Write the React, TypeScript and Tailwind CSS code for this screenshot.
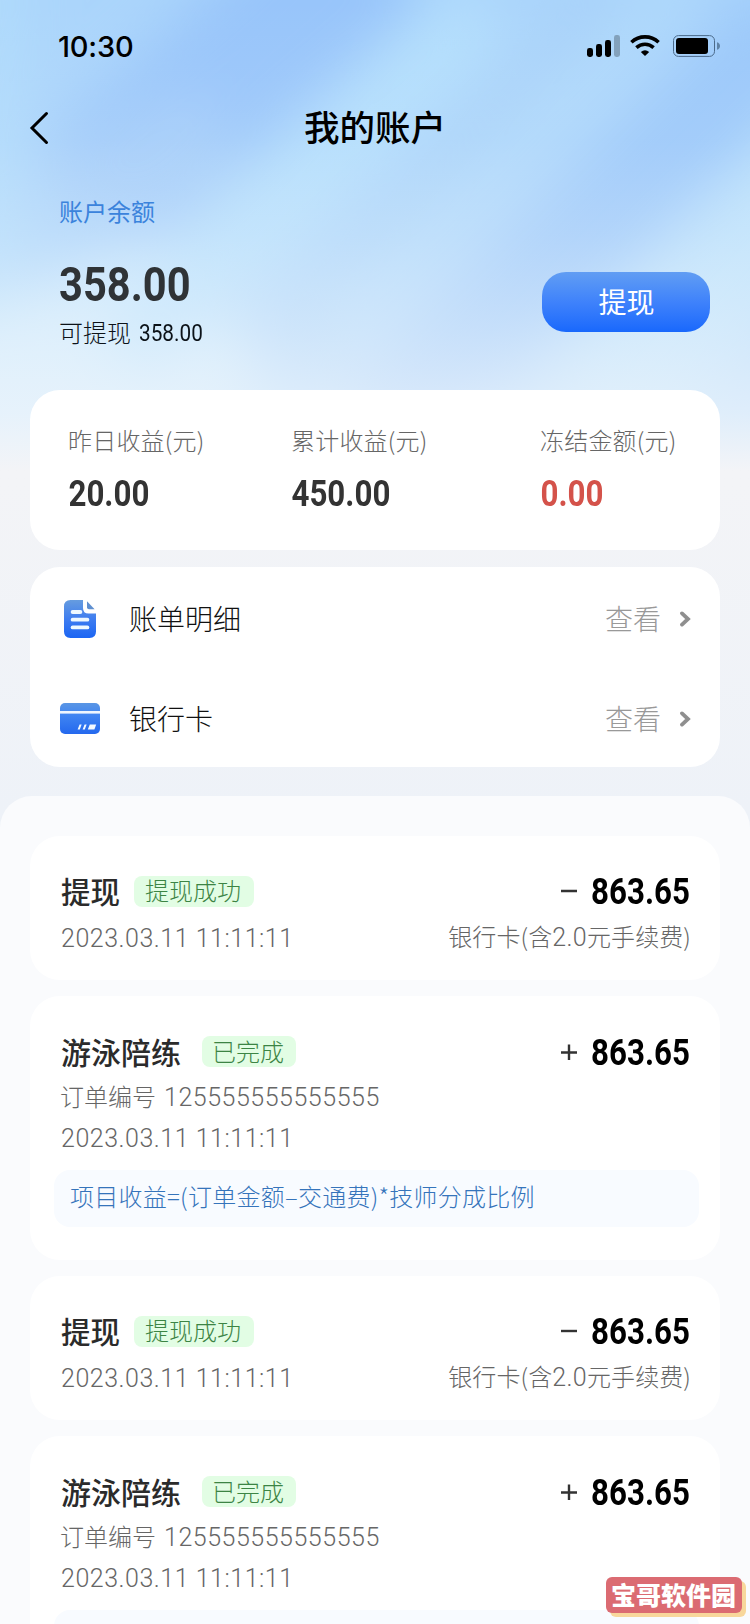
const CJK = "font-['Noto_Sans_CJK_SC',sans-serif]";
const NUM = "font-[Roboto,'Noto_Sans_CJK_SC',sans-serif] text-[25px] font-light tracking-[0.52px]";

function Backdrop() {
  return (
    <svg className="absolute inset-0" width="750" height="470" viewBox="0 0 750 470" preserveAspectRatio="none" aria-hidden="true">
      <defs>
        <filter id="soft" x="-30%" y="-30%" width="160%" height="160%">
          <feGaussianBlur stdDeviation="28" />
        </filter>
        <linearGradient id="fade" x1="0" y1="0" x2="0" y2="1">
          <stop offset="0" stopColor="#eff5fb" stopOpacity="0" />
          <stop offset="0.3" stopColor="#eff5fb" stopOpacity="0.1" />
          <stop offset="0.5" stopColor="#eff5fb" stopOpacity="0.28" />
          <stop offset="0.7" stopColor="#eff5fb" stopOpacity="0.52" />
          <stop offset="0.88" stopColor="#eff5fb" stopOpacity="0.76" />
          <stop offset="1" stopColor="#f3f4f7" stopOpacity="1" />
        </linearGradient>
      </defs>
      <rect width="750" height="470" fill="#abd5fb" />
      <g filter="url(#soft)" fill="none">
        <path d="M-30 500 L-10 -60" stroke="#b0dcfc" strokeWidth="60" />
        <path d="M100 190 L380 -60" stroke="#98c5fa" strokeWidth="150" />
        <path d="M60 200 L220 130" stroke="#a4cdf9" strokeWidth="90" />
        <path d="M-60 430 L230 320" stroke="#cbe9fd" strokeWidth="190" />
        <path d="M120 360 L480 10" stroke="#b4dffd" strokeWidth="76" />
        <path d="M300 350 L620 0" stroke="#a6cff8" strokeWidth="56" />
        <path d="M330 330 L680 -20" stroke="#b0dafc" strokeWidth="40" />
        <path d="M380 440 L590 230 L800 20" stroke="#9ac7fa" strokeWidth="105" />
        <path d="M590 420 L860 140" stroke="#b8e0fc" strokeWidth="125" />
      </g>
      <rect width="750" height="470" fill="url(#fade)" />
    </svg>
  );
}

function StatusIcons() {
  return (
    <svg width="136" height="24" viewBox="0 0 136 24" aria-hidden="true">
      <rect x="1" y="14" width="6" height="9" rx="2.4" />
      <rect x="10" y="10" width="6" height="13" rx="2.4" />
      <rect x="19" y="6" width="6" height="17" rx="2.4" />
      <rect x="28" y="1" width="6" height="22" rx="2.4" opacity="0.25" />
      <g fill="none" stroke="#000" strokeWidth="3.6">
        <path d="M45.4 8.2 A20 20 0 0 1 72.6 8.2" />
        <path d="M50.4 13.6 A12.8 12.8 0 0 1 67.6 13.6" />
      </g>
      <path d="M54.8 18 A6.6 6.6 0 0 1 63.2 18 L59 21.9 Z" />
      <rect x="87.5" y="1.6" width="41" height="20.8" rx="5" fill="none" stroke="#4b6a8a" strokeWidth="1" />
      <rect x="90" y="4" width="32" height="16" rx="3" />
      <path d="M131 8.3 Q134 9.2 134 12 Q134 14.8 131 15.8 Z" fill="#5f83a6" />
    </svg>
  );
}

function BillIcon() {
  return (
    <svg width="32" height="38" viewBox="0 0 32 38" aria-hidden="true">
      <defs>
        <linearGradient id="bill" x1="0" y1="0" x2="0" y2="1">
          <stop offset="0" stopColor="#669cdf" />
          <stop offset="0.5" stopColor="#3f7df0" />
          <stop offset="1" stopColor="#1b65f3" />
        </linearGradient>
      </defs>
      <path d="M6.5 0 H19 V8 Q19 13.5 24.5 13.5 H32 V31.5 Q32 38 25.5 38 H6.5 Q0 38 0 31.5 V6.5 Q0 0 6.5 0 Z" fill="url(#bill)" />
      <path d="M23 1.2 L30.6 9.2 H25 Q23 9.2 23 7.2 Z" fill="#5f8fd0" />
      <g stroke="#eef8ff" strokeWidth="3.8" strokeLinecap="round">
        <path d="M8.6 12 H16.4" />
        <path d="M8.6 19.7 H23.4" />
        <path d="M8.6 27.4 H23.4" />
      </g>
    </svg>
  );
}

function CardIcon() {
  return (
    <svg width="40" height="31" viewBox="0 0 40 31" aria-hidden="true">
      <defs>
        <linearGradient id="bank" x1="0" y1="0" x2="0" y2="1">
          <stop offset="0" stopColor="#5a96e4" />
          <stop offset="0.4" stopColor="#3f84f2" />
          <stop offset="1" stopColor="#2468ee" />
        </linearGradient>
      </defs>
      <rect width="40" height="31" rx="5" fill="url(#bank)" />
      <rect y="8" width="40" height="2.6" fill="#eef6ff" />
      <g fill="#f4faff">
        <path d="M19.6 21.4 H21.6 L19.8 26.4 H17.6 Z" />
        <path d="M24.6 21.4 H26.6 L24.8 26.4 H22.6 Z" />
        <path d="M29.8 21.4 H36.2 L34.4 26.4 H27.8 Z" />
      </g>
    </svg>
  );
}

function Chevron() {
  return (
    <svg width="11" height="16" viewBox="0 0 11 16" fill="none" stroke="#8f8f8f" strokeWidth="3.8" strokeLinecap="round" aria-hidden="true">
      <path d="M2 2.4 L8 8 L2 13.6" />
    </svg>
  );
}

function Stat({ label, value, className }: { label: string; value: string; className: string }) {
  return (
    <div className={className}>
      <div className="h-9 text-2xl leading-9 font-light tracking-[0.2px] whitespace-nowrap text-[#666]">{label}</div>
      <div className="mt-[18px] h-9 origin-left scale-x-[0.87] pl-[0.5px] font-[Roboto,sans-serif] text-[36px] leading-9 font-bold">{value}</div>
    </div>
  );
}

function MenuRow({ icon, label }: { icon: React.ReactNode; label: string }) {
  return (
    <div className="flex h-[100px] items-center pr-[29px] pb-px pl-[30px]">
      <div className="flex w-10 justify-center">{icon}</div>
      <span className="ml-[29px] pb-px text-[28px] leading-10 font-light text-[#111]">{label}</span>
      <span className="mr-[19px] ml-auto pb-px text-[28px] leading-10 font-light text-[#999]">查看</span>
      <Chevron />
    </div>
  );
}

function Amount({ sign }: { sign: "+" | "-" }) {
  return (
    <div className="ml-auto flex h-9 items-center">
      <svg width="16" height="16" viewBox="0 0 16 16" stroke="#333" strokeWidth="2.4" aria-hidden="true">
        <path d={sign === "+" ? "M0 8.5 H16 M8 0.5 V16" : "M0 8 H16"} />
      </svg>
      <div className="ml-[14px] w-[100px] pt-px">
        <div className="origin-left scale-x-[0.87] font-[Roboto,sans-serif] text-[36px] leading-9 font-bold text-black">863.65</div>
      </div>
    </div>
  );
}

function Badge({ children, className }: { children: string; className: string }) {
  return (
    <span className={`flex h-[31px] items-center justify-center rounded-lg bg-[#e2fde4] pr-[2px] pb-[2px] text-2xl leading-none font-light text-[#3c8444] ${className}`}>
      {children}
    </span>
  );
}

function Withdrawal() {
  return (
    <article className="mb-4 h-36 rounded-[30px] bg-white pt-[37px] pr-[29px] pl-[31px]">
      <div className="flex h-9 items-center">
        <h2 className="pb-[3px] text-[29.5px] leading-9 font-medium text-[#2b2b2b]">提现</h2>
        <Badge className="ml-[14px] w-[120px]">提现成功</Badge>
        <Amount sign="-" />
      </div>
      <div className="mt-[10px] flex h-9 items-center justify-between text-2xl leading-9 font-light whitespace-nowrap text-[#666]">
        <span className={`pt-[3px] ${NUM}`}>2023.03.11 11:11:11</span>
        <span className="-mt-px tracking-[0.1px]">
          银行卡(含<span className="font-[Roboto,sans-serif] text-[25px] tracking-[0.3px]">2.0</span>元手续费)
        </span>
      </div>
    </article>
  );
}

function Lesson({ formula }: { formula?: string }) {
  return (
    <article className="mb-4 h-[264px] rounded-[30px] bg-white pt-[38px] pr-[29px] pl-[31px]">
      <div className="flex h-9 items-center">
        <h2 className="pb-[3px] text-[30px] leading-9 font-medium text-[#2b2b2b]">游泳陪练</h2>
        <Badge className="-mt-px ml-[21px] w-[94px]">已完成</Badge>
        <Amount sign="+" />
      </div>
      <div className="mt-[6px] flex h-10 text-2xl leading-10 font-light whitespace-nowrap text-[#666]">
        <span className="-ml-px leading-10">订单编号</span>
        <span className={`ml-2 leading-[44px] ${NUM}`}>125555555555555</span>
      </div>
      <div className={`mt-[2px] h-10 leading-[42px] text-[#666] ${NUM}`}>2023.03.11 11:11:11</div>
      <div className="mt-3 -mr-2 -ml-[7px] h-[57px] rounded-2xl bg-[#f8fbff] pl-4 text-2xl leading-[52px] font-light tracking-[0.25px] whitespace-nowrap text-[#3574bb]">
        {formula}
      </div>
    </article>
  );
}

export default function App() {
  return (
    <main className={`relative h-[1624px] w-[750px] overflow-hidden bg-linear-to-b from-[#f3f4f7] from-30% to-[#eef2f8] to-50% ${CJK}`}>
      <Backdrop />
      <div className="relative flex h-full flex-col">
        <header className="flex h-[92px] items-center justify-between pr-[28px] pl-[58px]">
          <span className="pt-px font-[Inter,sans-serif] text-[29px] leading-none font-medium tracking-[-0.2px]">10:30</span>
          <StatusIcons />
        </header>
        <nav className="grid h-[72px] grid-cols-[1fr_auto_1fr] items-center pl-[29px]">
          <svg width="20" height="34" viewBox="0 0 20 34" fill="none" stroke="#000" strokeWidth="3" strokeLinecap="round" aria-hidden="true">
            <path d="M17.5 2.5 L3 17 L17.5 31.5" />
          </svg>
          <h1 className="pr-[29px] pb-1 text-[35.5px] leading-[68px] font-medium text-black">我的账户</h1>
        </nav>
        <section className="flex h-[226px] justify-between pr-10 pl-[59px]">
          <div>
            <div className="mt-[29px] h-9 text-2xl leading-9 text-[#3b83dc]">账户余额</div>
            <div className="mt-[32px] h-12 origin-left scale-x-[0.85] font-[Roboto,sans-serif] text-[49px] leading-[48px] font-bold text-[#2f3336]">358.00</div>
            <div className="mt-[5px] flex h-9 items-center text-2xl leading-9 font-light text-[#0c1218]">
              可提现
              <span className="ml-[8px] origin-left scale-x-[0.865] pt-px font-[Roboto,sans-serif] font-normal">358.00</span>
            </div>
          </div>
          <button className="mt-[108px] h-[60px] w-[168px] rounded-3xl bg-linear-to-b from-[#619df3] via-[#3f82fb] to-[#1868fc] pb-[3px] pl-px text-[28px] leading-none text-white">提现</button>
        </section>
        <section className="mx-[30px] flex h-40 shrink-0 rounded-[30px] bg-white pt-8 pl-[38px] text-[#333]">
          <Stat label="昨日收益(元)" value="20.00" className="w-[223px]" />
          <Stat label="累计收益(元)" value="450.00" className="w-[249px]" />
          <Stat label="冻结金额(元)" value="0.00" className="w-[160px] [&>div:last-child]:text-[#d4524a]" />
        </section>
        <section className="mx-[30px] mt-[17px] h-[200px] shrink-0 rounded-[30px] bg-white pt-[2px]">
          <MenuRow icon={<BillIcon />} label="账单明细" />
          <MenuRow icon={<CardIcon />} label="银行卡" />
        </section>
        <section className="mt-[29px] h-[828px] shrink-0 overflow-hidden rounded-t-[32px] bg-[#fafbfd] px-[30px] pt-10">
          <Withdrawal />
          <Lesson formula="项目收益=(订单金额–交通费)*技师分成比例" />
          <Withdrawal />
          <Lesson />
        </section>
      </div>
      <div className="absolute top-[1577px] left-[606px] flex h-9 w-[136px] items-center justify-center rounded-md bg-[#db6b72] pr-px pb-px text-[25px] leading-none font-black text-white shadow-[4px_4px_0_#f8d79b]">
        宝哥软件园
      </div>
    </main>
  );
}
